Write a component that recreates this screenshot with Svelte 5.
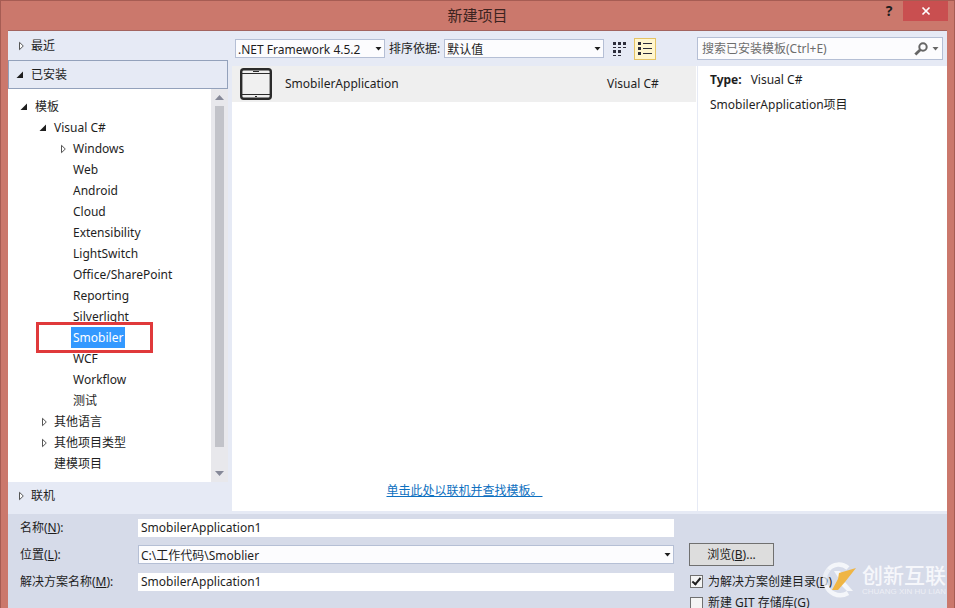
<script>
	let framework = '.NET Framework 4.5.2';
	let sortBy = '默认值';
	let view = 'list';
	let search = '';
	let selected = 'Smobiler';

	let projectName = 'SmobilerApplication1';
	let location = 'C:\\工作代码\\Smoblier';
	let solutionName = 'SmobilerApplication1';
	let createFolder = true;
	let createGit = false;

	// state: open, closed or undefined for a leaf
	const tree = [
		{ name: '模板', level: 0, state: 'open' },
		{ name: 'Visual C#', level: 1, state: 'open' },
		{ name: 'Windows', level: 2, state: 'closed' },
		{ name: 'Web', level: 2 },
		{ name: 'Android', level: 2 },
		{ name: 'Cloud', level: 2 },
		{ name: 'Extensibility', level: 2 },
		{ name: 'LightSwitch', level: 2 },
		{ name: 'Office/SharePoint', level: 2 },
		{ name: 'Reporting', level: 2 },
		{ name: 'Silverlight', level: 2 },
		{ name: 'Smobiler', level: 2, marked: true },
		{ name: 'WCF', level: 2 },
		{ name: 'Workflow', level: 2 },
		{ name: '测试', level: 2 },
		{ name: '其他语言', level: 1, state: 'closed' },
		{ name: '其他项目类型', level: 1, state: 'closed' },
		{ name: '建模项目', level: 1 }
	];
</script>

{#snippet arrow(state)}
	<svg class="arrow" width="8" height="10" viewBox="0 0 8 10" aria-hidden="true">
		{#if state === 'open'}
			<path d="M7 1.500v6.500H.5z" fill="#1e1e1e" />
		{:else if state === 'closed'}
			<path d="M3.500 1.300v7.400L7.300 5z" fill="#fff" stroke="#555" />
		{/if}
	</svg>
{/snippet}

{#snippet caret()}
	<svg class="caret" width="7" height="4" viewBox="0 0 7 4" aria-hidden="true">
		<path d="M.5 0h6l-3 3.500z" fill="currentColor" />
	</svg>
{/snippet}

<main class="dialog">
	<header>
		<h1>新建项目</h1>
		<div class="window-buttons">
			<button class="help" aria-label="帮助">?</button>
			<button class="close" aria-label="关闭">
				<svg width="10" height="10" viewBox="0 0 10 10"><path d="M1.500 1.500l7 7M8.500 1.500l-7 7" stroke="#fff" stroke-width="1.700" /></svg>
			</button>
		</div>
	</header>

	<div class="content">
		<nav>
			<button class="section">{@render arrow('closed')}最近</button>
			<button class="section current">{@render arrow('open')}已安装</button>
			<div class="tree-box">
				<ul>
					{#each tree as item}
						<li class="level{item.level}" class:marked={item.marked}>
							{@render arrow(item.state)}
							<button class:selected={selected === item.name} on:click={() => selected = item.name}>{item.name}</button>
						</li>
					{/each}
				</ul>
				<div class="scrollbar">
					<svg width="9" height="5" viewBox="0 0 9 5"><path d="M0 5L4.500 0 9 5z" fill="#868999" /></svg>
					<div class="thumb"></div>
					<svg width="9" height="5" viewBox="0 0 9 5"><path d="M0 0l4.500 5L9 0z" fill="#868999" /></svg>
				</div>
			</div>
			<button class="section online">{@render arrow('closed')}联机</button>
		</nav>

		<section class="main">
			<div class="toolbar">
				<div class="filters">
					<div class="select framework">
						<select bind:value={framework} aria-label="框架">
							<option>.NET Framework 4.5.2</option>
						</select>
						{@render caret()}
					</div>
					<label for="sort">排序依据:</label>
					<div class="select sort">
						<select id="sort" bind:value={sortBy}>
							<option>默认值</option>
						</select>
						{@render caret()}
					</div>
					<button class="view small" class:active={view === 'small'} aria-label="小图标" on:click={() => view = 'small'}>
						<svg width="14" height="14" viewBox="0 0 14 14" fill="#2d2d3a">
							<path d="M0 0h3v3H0zM5 0h3v3H5zM10 0h3v3h-3zM0 8h3v3H0zM5 8h3v3H5zM0 5h3v1H0zM5 5h3v1H5zM10 5h3v1h-3zM0 13h3v1H0zM5 13h3v1H5z" />
						</svg>
					</button>
					<button class="view" class:active={view === 'list'} aria-label="列表" on:click={() => view = 'list'}>
						<svg width="14" height="14" viewBox="0 0 14 14" fill="#2d2d3a">
							<path d="M0 0h3v3H0zM0 5h3v3H0zM0 10h3v3H0zM5 1h9v1H5zM5 6h9v1H5zM5 11h9v1H5z" />
						</svg>
					</button>
				</div>
				<div class="search">
					<input type="text" placeholder="搜索已安装模板(Ctrl+E)" aria-label="搜索已安装模板" bind:value={search} />
					<svg width="14" height="14" viewBox="0 0 14 14" fill="none" stroke="#666">
						<circle cx="9" cy="5" r="3.700" stroke-width="2" />
						<path d="M6.300 7.700L1.300 12.500" stroke-width="2.800" />
					</svg>
					{@render caret()}
				</div>
			</div>

			<div class="panes">
				<div class="list">
					<button class="template">
						<svg width="32" height="32" viewBox="0 0 32 32" fill="none" stroke="#2b2b2b">
							<rect x="1.200" y="1.200" width="29.600" height="29.600" rx="2.500" stroke-width="2.400" fill="#f0f0f0" />
							<path d="M2 5.500h28M2 26.500h28M13 3.500h6M15 28.500h2" />
						</svg>
						<span>SmobilerApplication</span>
						<span class="lang">Visual C#</span>
					</button>
					<a href="#online">单击此处以联机并查找模板。</a>
				</div>
				<aside>
					<p><strong>Type:</strong>Visual C#</p>
					<p>SmobilerApplication项目</p>
				</aside>
			</div>
		</section>
	</div>

	<form>
		<label for="name">名称(<u>N</u>):</label>
		<input id="name" type="text" bind:value={projectName} />

		<label class="first" for="location">位置(<u>L</u>):</label>
		<div class="select">
			<select id="location" bind:value={location}>
				<option>C:\工作代码\Smoblier</option>
			</select>
			{@render caret()}
		</div>
		<button type="button" class="browse">浏览(<u>B</u>)...</button>

		<label class="first" for="solution">解决方案名称(<u>M</u>):</label>
		<input id="solution" type="text" bind:value={solutionName} />
		<label class="check"><input type="checkbox" bind:checked={createFolder} />为解决方案创建目录(<u>D</u>)</label>
		<label class="check last"><input type="checkbox" bind:checked={createGit} />新建 GIT 存储库(G)</label>
	</form>

	<div class="watermark">
		<svg width="34" height="36" viewBox="0 0 34 36" fill="none">
			<path d="M26 6C20 1 11 1.500 6.500 7.500M4 23C6 30 16 37 26 31" stroke="#f4f6fa" stroke-width="4.500" />
			<path d="M6.500 7.500C2.500 12 2.500 18 4 23" stroke="#f4f6fa" stroke-width="4.500" opacity="0.700" />
			<path d="M12 9h6l3 4-4 4z" fill="#f4f6fa" />
			<path d="M19 23l4-3 8 9h-6z" fill="#f4f6fa" />
			<path d="M34 6L17 11l-1 6-6 11h6l7-8z" fill="#efb544" />
		</svg>
		<div>
			<b>创新互联</b>
			<small>CHUANG XIN HU LIAN</small>
		</div>
	</div>
</main>

<style>
	:global(body) {
		margin: 0;
		overflow: hidden;
	}

	.dialog {
		position: relative;
		display: flex;
		flex-direction: column;
		box-sizing: border-box;
		height: 100vh;
		padding: 0 7px;
		overflow: hidden;
		background: #cb786c;
		border: 1px solid #a65c53;
		border-bottom: 0;
		font-family: "Noto Sans", "Noto Sans CJK SC", sans-serif;
		font-size: 12px;
		line-height: 20px;
		color: #1e1e1e;
	}

	button, input, select {
		box-sizing: border-box;
		margin: 0;
		font: inherit;
		color: inherit;
		border-radius: 0;
	}

	button {
		padding: 0;
		border: 0;
		background: none;
		text-align: left;
	}

	svg {
		flex: none;
	}

	header {
		position: relative;
		flex: 0 0 29px;
		border-bottom: 1px solid #a3645f;
	}

	h1 {
		margin: 0;
		font-size: 15px;
		line-height: 28px;
		font-weight: 400;
		text-align: center;
		color: #3c2320;
	}

	.window-buttons {
		position: absolute;
		top: 0;
		right: -7px;
		display: flex;
		align-items: center;
	}

	.help {
		width: 28px;
		font-size: 14px;
		font-weight: 700;
		text-align: center;
	}

	.close {
		display: flex;
		align-items: center;
		justify-content: center;
		width: 45px;
		height: 20px;
		margin-right: 6px;
		background: #c94f50;
	}

	.content {
		flex: 1;
		min-height: 0;
		display: flex;
		background: #e6eaf5;
	}

	nav {
		flex: 0 0 220px;
		display: flex;
		flex-direction: column;
	}

	.section {
		display: flex;
		align-items: center;
		gap: 7px;
		height: 29px;
		padding-left: 8px;
	}

	.section.current {
		padding-left: 7px;
		border: 1px solid #93a1bb;
	}

	.section.online {
		height: 27px;
		margin-bottom: 5px;
	}

	.tree-box {
		flex: 1;
		min-height: 0;
		display: flex;
		background: #fff;
	}

	ul {
		flex: 1;
		margin: 0;
		padding: 7px 0 0;
		list-style: none;
		overflow: hidden;
	}

	li {
		position: relative;
		display: flex;
		align-items: center;
		gap: 5px;
		height: 21px;
		padding-left: 12px;
	}

	li.level1 {
		padding-left: 31px;
	}

	li.level2 {
		padding-left: 50px;
	}

	li button {
		height: 21px;
		padding: 0 2px;
	}

	li .selected {
		background: #3399ff;
		color: #fff;
	}

	/* red highlight around the item */
	.marked::after {
		content: '';
		position: absolute;
		top: -5px;
		left: 28px;
		width: 111px;
		height: 25px;
		border: 3px solid #e0393b;
		pointer-events: none;
	}

	.scrollbar {
		flex: 0 0 17px;
		display: flex;
		flex-direction: column;
		align-items: center;
		gap: 6px;
		box-sizing: border-box;
		padding: 6px 0;
		background: #e8e8ec;
	}

	.thumb {
		flex: 1;
		width: 9px;
		margin-bottom: 18px;
		background: #c2c3c9;
	}

	.main {
		flex: 1;
		min-width: 0;
		display: flex;
		flex-direction: column;
		padding: 0 0 3px 4px;
	}

	.toolbar, .filters {
		display: flex;
		align-items: center;
	}

	.toolbar {
		flex: 0 0 35px;
	}

	.filters {
		flex: 1;
		padding-left: 3px;
	}

	.filters label {
		margin: 0 4px;
	}

	.select {
		position: relative;
	}

	.select select {
		display: block;
		width: 100%;
		height: 19px;
		padding: 0 2px;
		appearance: none;
		border: 1px solid #b5bfd5;
		background: #fcfcfe;
	}

	.select .caret {
		position: absolute;
		top: 8px;
		right: 3px;
		pointer-events: none;
	}

	.framework {
		width: 150px;
	}

	.sort {
		width: 160px;
	}

	.view {
		display: flex;
		align-items: center;
		justify-content: center;
		box-sizing: border-box;
		width: 22px;
		height: 22px;
		border: 1px solid transparent;
	}

	.view.small {
		margin: 0 3px 0 5px;
	}

	.view.active {
		border-color: #e5c365;
		background: #fff6cf;
	}

	.search {
		flex: 0 0 246px;
		display: flex;
		align-items: center;
		gap: 4px;
		box-sizing: border-box;
		height: 23px;
		margin-right: 4px;
		padding-right: 3px;
		border: 1px solid #b5bfd5;
		background: #fcfcfe;
		color: #666;
	}

	.search input {
		flex: 1;
		min-width: 0;
		padding: 0 4px;
		border: 0;
		background: none;
	}

	.search input::placeholder {
		color: #6d6d6d;
		opacity: 1;
	}

	.panes {
		flex: 1;
		min-height: 0;
		display: flex;
		background: #fff;
	}

	.list {
		flex: 1;
		display: flex;
		flex-direction: column;
		justify-content: space-between;
		align-items: center;
	}

	.template {
		display: flex;
		align-items: center;
		gap: 13px;
		box-sizing: border-box;
		width: 100%;
		height: 36px;
		padding: 0 0 0 8px;
		border-right: 1px solid #fff;
		background: #efefef;
	}

	.lang {
		width: 89px;
		margin-left: auto;
	}

	.list a {
		margin-bottom: 10px;
		color: #0e70c0;
	}

	aside {
		flex: 0 0 250px;
		box-sizing: border-box;
		padding: 1px 12px;
		border-left: 1px solid #e6eaf5;
	}

	p {
		margin: 0;
		line-height: 25px;
	}

	strong {
		margin-right: 9px;
	}

	form {
		flex: 0 0 94px;
		display: grid;
		grid-template-columns: 118px 1fr 273px;
		grid-template-rows: 27px 27px 27px 16px;
		align-items: center;
		box-sizing: border-box;
		min-height: 0;
		padding: 0 0 0 12px;
		background: #d6dbe9;
	}

	form .first {
		grid-column: 1;
	}

	form > input {
		height: 18px;
		width: 100%;
		padding: 0 3px;
		border: 0;
		background: #fff;
	}

	.browse {
		width: 85px;
		height: 23px;
		border: 1px solid #707070;
		background: #dddddd;
		text-align: center;
	}

	.browse, .check {
		margin-left: 15px;
	}

	.check {
		display: flex;
		align-items: center;
		line-height: 16px;
		white-space: pre;
	}

	.check.last {
		grid-column: 3;
	}

	.check input {
		width: 13px;
		height: 13px;
		margin: 0 5px 0 1px;
		appearance: none;
		border: 1px solid #707070;
		background: #f4f4f4;
	}

	.check input:checked::after {
		content: '';
		display: block;
		width: 3px;
		height: 7px;
		margin: 0 0 0 3px;
		border: solid #1e1e1e;
		border-width: 0 2px 2px 0;
		transform: rotate(40deg);
	}

	.watermark {
		position: absolute;
		right: 8px;
		bottom: 10px;
		display: flex;
		align-items: center;
		gap: 6px;
		color: #f6f7fb;
		pointer-events: none;
	}

	.watermark div {
		display: flex;
		flex-direction: column;
		font-family: "Liberation Sans", "Noto Sans CJK SC", sans-serif;
	}

	.watermark b {
		font-size: 21px;
		line-height: 24px;
		font-weight: 500;
	}

	.watermark small {
		font-size: 8px;
		line-height: 8px;
		white-space: nowrap;
		opacity: 0.7;
	}
</style>
